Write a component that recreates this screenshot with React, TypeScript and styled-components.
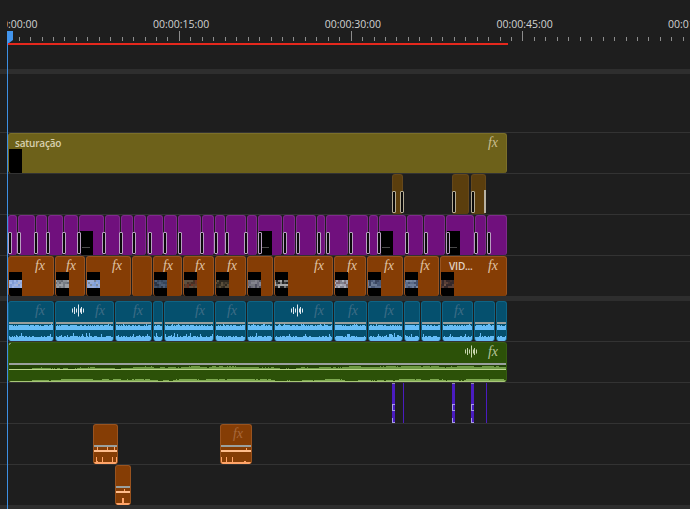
import React from "react";
import styled, { createGlobalStyle } from "styled-components";

const Global = createGlobalStyle`
  html, body { margin: 0; padding: 0; background: #1e1e1e; }
  body { font-family: "Open Sans", "Liberation Sans", sans-serif; }
`;

type Span = [number, number];

const rng = (seed: number) => {
  let s = seed * 2654435 + 1237;
  return () => {
    s = (s * 1103515245 + 12345) & 0x7fffffff;
    return (s >> 8) / 8388607;
  };
};

const Timeline = styled.div`
  position: relative;
  width: 690px;
  height: 509px;
  overflow: hidden;
  display: flex;
  flex-direction: column;
  background: #1e1e1e;
`;
const Ruler = styled.header`
  position: relative;
  height: 69px;
  flex: none;
`;
const LabelClip = styled.div`
  margin-left: 7px;
  padding-top: 17px;
  height: 14px;
  overflow: hidden;
`;
const LabelRow = styled.div`
  display: flex;
  margin-left: -25.7px;
`;
const TimeLabel = styled.span`
  flex: 0 0 171.7px;
  font-size: 10.5px;
  line-height: 14px;
  color: #d2d2d2;
  white-space: nowrap;
`;
const Ticks = styled.svg`
  display: block;
`;
const WorkArea = styled.div`
  position: absolute;
  left: 8px;
  top: 43px;
  width: 500px;
  height: 2px;
  background: #e5281d;
`;
const Band = styled.div<{ $h: number }>`
  flex: none;
  height: ${(p) => p.$h}px;
  background: #2e2e2e;
`;
const EmptyTrack = styled.div`
  flex: none;
  height: 58px;
  border-bottom: 1px solid #333;
`;
const Track = styled.section<{ $open?: boolean }>`
  position: relative;
  flex: none;
  display: flex;
  height: 40px;
  padding-left: 8px;
  border-bottom: ${(p) => (p.$open ? "none" : "1px solid #333")};
`;

const tones = {
  olive: ["#6d611a", "#7b6f2a"],
  umber: ["#5b3e0d", "#66481a"],
  purple: ["#70107d", "#7f2a8c"],
  rust: ["#853d05", "#99531f"],
  teal: ["#05506e", "#0f6485"],
  green: ["#2c5108", "#365c12"],
};
type Tone = keyof typeof tones;

const Clip = styled.div<{ $tone: Tone }>`
  position: relative;
  flex: none;
  box-sizing: border-box;
  height: 40px;
  display: flex;
  flex-direction: column;
  overflow: hidden;
  border-radius: 3px;
  border: 1px solid ${(p) => tones[p.$tone][1]};
  border-width: 1px 1px 0 1px;
  background: ${(p) => tones[p.$tone][0]};
`;
const ClipHead = styled.div<{ $audio?: boolean }>`
  flex: none;
  box-sizing: border-box;
  height: ${(p) => (p.$audio ? 20 : 17)}px;
  padding: ${(p) => (p.$audio ? "0 8px 3px 6px" : "0 8px 0 6px")};
  display: flex;
  align-items: center;
  justify-content: space-between;
  gap: 4px;
`;
const ClipName = styled.span`
  font-size: 10px;
  font-weight: 600;
  line-height: 14px;
  letter-spacing: -0.2px;
  color: #d8d0b0;
  white-space: nowrap;
`;
const VidName = styled(ClipName)`
  color: #e2d3c6;
  padding-left: 2px;
`;
const HeadRight = styled.div`
  margin-left: auto;
  display: flex;
  align-items: center;
  gap: 11px;
`;
const Fx = styled.i<{ $color: string }>`
  font-family: "Liberation Serif", serif;
  font-style: italic;
  font-size: 14px;
  line-height: 14px;
  color: ${(p) => p.$color};
`;
const SoundIcon = styled.svg`
  display: block;
  flex: none;
`;
const Rule = styled.div`
  flex: none;
  height: 2px;
  margin: 0 -1px;
  background: #9aa09e;
`;
const WaveFill = styled.svg`
  display: block;
  flex: none;
  margin-left: -1px;
`;
const ThumbSlot = styled.svg`
  position: absolute;
  left: -1px;
  bottom: 0;
  display: block;
`;
const Marker = styled.div<{ $ink: string }>`
  position: absolute;
  top: 17px;
  height: 22px;
  box-sizing: border-box;
  border: 1px solid ${(p) => p.$ink};
  border-radius: 1px;
  background: #0a0a0a;
`;
const SolidMarker = styled.div`
  position: absolute;
  top: 16px;
  width: 2px;
  height: 23px;
  background: #b7b2a4;
`;
const Cut = styled.div`
  position: relative;
  flex: none;
  height: 40px;
  background: #4a1cc0;
`;
const CutCap = styled.div`
  height: 1px;
  background: #8f8aa8;
`;
const CutMarkC = styled.div`
  position: absolute;
  left: 0;
  top: 21px;
  width: 3px;
  height: 7px;
  box-sizing: border-box;
  border: solid #a79be8;
  border-width: 1px 0 1px 1px;
`;
const CutMarkL = styled.div`
  position: absolute;
  left: 0;
  bottom: 0;
  width: 3px;
  height: 5px;
  box-sizing: border-box;
  border: solid #a79be8;
  border-width: 0 0 1px 1px;
`;
const Flag = styled.svg`
  position: absolute;
  left: -1px;
  top: -1px;
  display: block;
`;
const PlayheadLine = styled.div`
  position: absolute;
  left: 7px;
  top: 40px;
  bottom: 0;
  width: 1px;
  background: #3d8fe2;
`;
const PlayheadCap = styled.svg`
  position: absolute;
  left: 7px;
  top: 31px;
  display: block;
`;

const flow = (spans: Span[], i: number, start = 8) => {
  const prev = i === 0 ? start : spans[i - 1][1];
  return { marginLeft: spans[i][0] - prev, width: spans[i][1] - spans[i][0] };
};

const bars = (
  w: number,
  seed: number,
  base: number,
  lo: number,
  hi: number,
  spike = 0.05,
  spikeH = 0
) => {
  const r = rng(seed);
  let d = "";
  for (let x = 0; x < w; x++) {
    let h = lo + r() * (hi - lo);
    if (r() < spike) h += spikeH;
    d += `M${x + 0.5} ${base}V${(base - h).toFixed(1)}`;
  }
  return d;
};

const swell = (w: number, seed: number, base: number, from: number, peak: number) => {
  const r = rng(seed);
  let level = 0;
  let d = "";
  for (let x = from; x < w; x++) {
    level = Math.max(0, Math.min(peak, level + (r() - 0.48) * 0.9));
    if (level >= 0.5) d += `M${x + 0.5} ${base}V${Math.round(base - level)}`;
  }
  return d;
};

const Sound = ({ color }: { color: string }) => (
  <SoundIcon width="12" height="13" viewBox="0 0 12 13">
    <path
      d="M0.5 4.5V8.5M2.5 3V10M4.5 4.5V8.5M6.5 0.5V12.5M8.5 4.5V8.5M9.5 3V10M11.5 4.5V8.5"
      stroke={color}
      strokeWidth="1"
    />
  </SoundIcon>
);

const thumbPalettes: string[][] = [
  ["#8ea8e0", "#9db4e4", "#aab2cc", "#7f9bd4"],
  ["#8a8f96", "#767c84", "#9a9ea4", "#666c76"],
  ["#7f9fd8", "#90a8d8", "#7a8898", "#98acd4"],
  ["#3f5068", "#34445a", "#4c5c74", "#2c3444"],
  ["#5a4030", "#453025", "#6a3424", "#5e5040"],
  ["#4a4030", "#2c2820", "#5a4e3a", "#3a3428"],
  ["#6a6a78", "#84848f", "#505060", "#74767e"],
  ["#3c3c3c", "#7c7c7c", "#242424", "#a8a8a8"],
  ["#a0a0b0", "#80808e", "#b0b0ba", "#786870"],
  ["#4a5a78", "#5e6e8c", "#3a4660", "#6c7c96"],
  ["#5a6a88", "#6c7c98", "#44506c", "#7686a0"],
  ["#5a4038", "#42302c", "#6e5244", "#34282a"],
];

const Thumb = ({ index }: { index: number }) => {
  const r = rng(index + 40);
  const p = thumbPalettes[index];
  const cells: React.ReactNode[] = [];
  for (let y = 8; y < 16; y += 2) {
    for (let x = 0; x < 14; x += 2) {
      cells.push(
        <rect key={`${x}-${y}`} x={x} y={y} width="2" height="2" fill={p[Math.floor(r() * 4)]} />
      );
    }
  }
  return (
    <ThumbSlot width="14" height="24" viewBox="0 0 14 24" shapeRendering="crispEdges">
      <rect width="14" height="24" fill="#000" />
      {cells}
    </ThumbSlot>
  );
};

const DarkThumb = () => (
  <ThumbSlot width="14" height="24" viewBox="0 0 14 24" shapeRendering="crispEdges">
    <rect width="14" height="24" fill="#000" />
    <rect x="3" y="16" width="8" height="1" fill="#4a4a4a" />
  </ThumbSlot>
);

const umberSpans: Span[] = [[392, 403], [452, 469], [471, 486]];
const purpleSpans: Span[] = [
  [8, 17], [18, 35], [36, 47], [48, 63], [64, 78], [79, 104], [105, 120], [121, 133],
  [134, 146], [147, 163], [164, 177], [178, 201], [202, 214], [215, 225], [226, 246],
  [247, 257], [258, 282], [283, 295], [296, 316], [317, 325], [326, 348], [349, 368],
  [369, 378], [379, 406], [407, 423], [424, 445], [446, 474], [475, 486], [487, 507],
];
const purpleThumbs = [79, 258, 379, 446];
const purpleMarkers = [
  8, 17, 34, 46, 62, 77, 102, 119, 132, 148, 163, 178, 200, 214, 225, 244, 258, 283, 296,
  317, 326, 349, 366, 377, 405, 424, 446, 474, 487,
];

const rustClips: { span: Span; fx: boolean; thumb?: number; name?: string }[] = [
  { span: [8, 54], fx: true, thumb: 0 },
  { span: [55, 85], fx: true, thumb: 1 },
  { span: [86, 131], fx: true, thumb: 2 },
  { span: [132, 152], fx: false },
  { span: [153, 182], fx: true, thumb: 3 },
  { span: [183, 214], fx: true, thumb: 4 },
  { span: [215, 246], fx: true, thumb: 5 },
  { span: [247, 273], fx: false, thumb: 6 },
  { span: [274, 333], fx: true, thumb: 7 },
  { span: [334, 366], fx: true, thumb: 8 },
  { span: [367, 403], fx: true, thumb: 9 },
  { span: [404, 439], fx: true, thumb: 10 },
  { span: [440, 507], fx: true, thumb: 11, name: "VID..." },
];

const tealClips: { span: Span; fx?: boolean; sound?: boolean }[] = [
  { span: [8, 54], fx: true },
  { span: [55, 114], fx: true, sound: true },
  { span: [115, 152], fx: true },
  { span: [153, 163] },
  { span: [164, 214], fx: true },
  { span: [215, 246], fx: true },
  { span: [247, 273] },
  { span: [274, 333], fx: true, sound: true },
  { span: [334, 367], fx: true },
  { span: [368, 403], fx: true },
  { span: [404, 420] },
  { span: [421, 441] },
  { span: [442, 473], fx: true },
  { span: [474, 495] },
  { span: [496, 507] },
];

const cuts: { span: Span; thin?: boolean }[] = [
  { span: [392, 395] },
  { span: [403, 404], thin: true },
  { span: [452, 455] },
  { span: [471, 474] },
  { span: [486, 487], thin: true },
];

const BlueWave = ({ w, seed }: { w: number; seed: number }) => (
  <WaveFill width={w} height="17" shapeRendering="crispEdges">
    <path d={bars(w, seed, 6, 4, 5.4, 0.06, 1)} stroke="#66bcf6" strokeWidth="1" />
    <path d={bars(w, seed + 9, 17, 3.6, 5.4, 0.1, 2.5)} stroke="#66bcf6" strokeWidth="1" />
  </WaveFill>
);

const OrangeWave = ({ w, seed }: { w: number; seed: number }) => (
  <WaveFill width={w} height="17" shapeRendering="crispEdges">
    <path d={bars(w, seed, 5, 1.5, 2.5, 0.1, 2.5)} stroke="#ffa468" strokeWidth="1" />
    <rect x="0" y="3" width={w} height="2" fill="#ffbd8c" />
    <path d={bars(w, seed + 5, 17, 1.6, 2.6, 0.1, 5)} stroke="#ffa468" strokeWidth="1" />
  </WaveFill>
);

const GreenWave = ({ w }: { w: number }) => (
  <WaveFill width={w} height="17" shapeRendering="crispEdges">
    <rect x="0" y="0" width={w} height="4" fill="#234306" />
    <path d={swell(w, 7, 4, 22, 3)} stroke="#6f9a45" strokeWidth="1" />
    <rect x="0" y="4" width={w} height="1" fill="#bcd68f" />
    <path d={swell(w, 11, 16, 22, 2)} stroke="#7da850" strokeWidth="1" />
    <rect x="0" y="16" width={w} height="1" fill="#a8c878" />
  </WaveFill>
);

const tickPath = () => {
  let minor = "";
  let major = "";
  for (let i = 1; i < 60; i++) {
    const x = Math.floor(7.7 + 11.45 * i) + 0.5;
    if (i % 15 === 0) major += `M${x} 0V10`;
    else minor += `M${x} 5.5V10`;
  }
  return { minor, major };
};

export default function App() {
  const t = tickPath();
  return (
    <Timeline>
      <Global />
      <Ruler>
        <LabelClip>
          <LabelRow>
            {["00:00:00:00", "00:00:15:00", "00:00:30:00", "00:00:45:00", "00:01:00:00"].map((l) => (
              <TimeLabel key={l}>{l}</TimeLabel>
            ))}
          </LabelRow>
        </LabelClip>
        <Ticks width="690" height="11" shapeRendering="crispEdges">
          <path d={t.minor} stroke="#8c8c8c" />
          <path d={t.major} stroke="#8c8c8c" />
        </Ticks>
        <WorkArea />
      </Ruler>
      <Band $h={5} />
      <EmptyTrack />

      <Track>
        <Clip $tone="olive" style={{ width: 499 }}>
          <ClipHead>
            <ClipName>saturação</ClipName>
            <Fx $color="#c9bd8e">fx</Fx>
          </ClipHead>
          <ThumbSlot width="14" height="24" shapeRendering="crispEdges">
            <rect width="14" height="24" fill="#000" />
          </ThumbSlot>
        </Clip>
      </Track>

      <Track>
        {umberSpans.map((s, i) => (
          <Clip key={s[0]} $tone="umber" style={flow(umberSpans, i)} />
        ))}
        {[392, 400, 452, 471].map((x) => (
          <Marker key={x} $ink="#b5ad95" style={{ left: x, width: 4 }} />
        ))}
        <SolidMarker style={{ left: 484 }} />
      </Track>

      <Track>
        {purpleSpans.map((s, i) => (
          <Clip key={s[0]} $tone="purple" style={flow(purpleSpans, i)}>
            {purpleThumbs.includes(s[0]) && <DarkThumb />}
          </Clip>
        ))}
        {purpleMarkers.map((x) => (
          <Marker key={x} $ink="#b79fc0" style={{ left: x, width: 4 }} />
        ))}
      </Track>

      <Track $open>
        {rustClips.map((c, i) => (
          <Clip key={c.span[0]} $tone="rust" style={flow(rustClips.map((k) => k.span), i)}>
            <ClipHead>
              {c.name && <VidName>{c.name}</VidName>}
              {c.fx && (
                <HeadRight>
                  <Fx $color="#e0c3a4">fx</Fx>
                </HeadRight>
              )}
            </ClipHead>
            {c.thumb !== undefined && <Thumb index={c.thumb} />}
          </Clip>
        ))}
      </Track>
      <Band $h={5} />

      <Track>
        {tealClips.map((c, i) => (
          <Clip key={c.span[0]} $tone="teal" style={flow(tealClips.map((k) => k.span), i)}>
            <ClipHead $audio>
              <HeadRight>
                {c.sound && <Sound color="#dfe8ee" />}
                {c.fx && <Fx $color="#3f6d86">fx</Fx>}
              </HeadRight>
            </ClipHead>
            <Rule />
            <BlueWave w={c.span[1] - c.span[0]} seed={c.span[0] + 3} />
          </Clip>
        ))}
      </Track>

      <Track>
        <Clip $tone="green" style={{ width: 499 }}>
          <ClipHead $audio>
            <HeadRight>
              <Sound color="#c8d6ae" />
              <Fx $color="#b5c49a">fx</Fx>
            </HeadRight>
          </ClipHead>
          <Rule />
          <GreenWave w={499} />
          <Flag width="4" height="4" viewBox="0 0 4 4">
            <path d="M0 0H4L0 4Z" fill="#f0f0f0" />
          </Flag>
        </Clip>
      </Track>

      <Track>
        {cuts.map((c, i) => (
          <Cut key={c.span[0]} style={flow(cuts.map((k) => k.span), i)}>
            {!c.thin && (
              <>
                <CutCap />
                <CutMarkC />
                <CutMarkL />
              </>
            )}
          </Cut>
        ))}
      </Track>

      <Track>
        {([[93, 118], [220, 252]] as Span[]).map((s, i, all) => (
          <Clip key={s[0]} $tone="rust" style={flow(all, i)}>
            <ClipHead $audio>
              {s[0] === 220 && (
                <HeadRight>
                  <Fx $color="#a8693c">fx</Fx>
                </HeadRight>
              )}
            </ClipHead>
            <Rule />
            <OrangeWave w={s[1] - s[0]} seed={s[0]} />
          </Clip>
        ))}
      </Track>

      <Track $open>
        <Clip $tone="rust" style={{ marginLeft: 107, width: 16 }}>
          <ClipHead $audio />
          <Rule />
          <OrangeWave w={16} seed={77} />
        </Clip>
      </Track>
      <Band $h={4} />

      <PlayheadLine />
      <PlayheadCap width="6" height="12" viewBox="0 0 6 12">
        <path d="M0 0H6V9L2 12H0Z" fill="#4295ee" />
      </PlayheadCap>
    </Timeline>
  );
}
